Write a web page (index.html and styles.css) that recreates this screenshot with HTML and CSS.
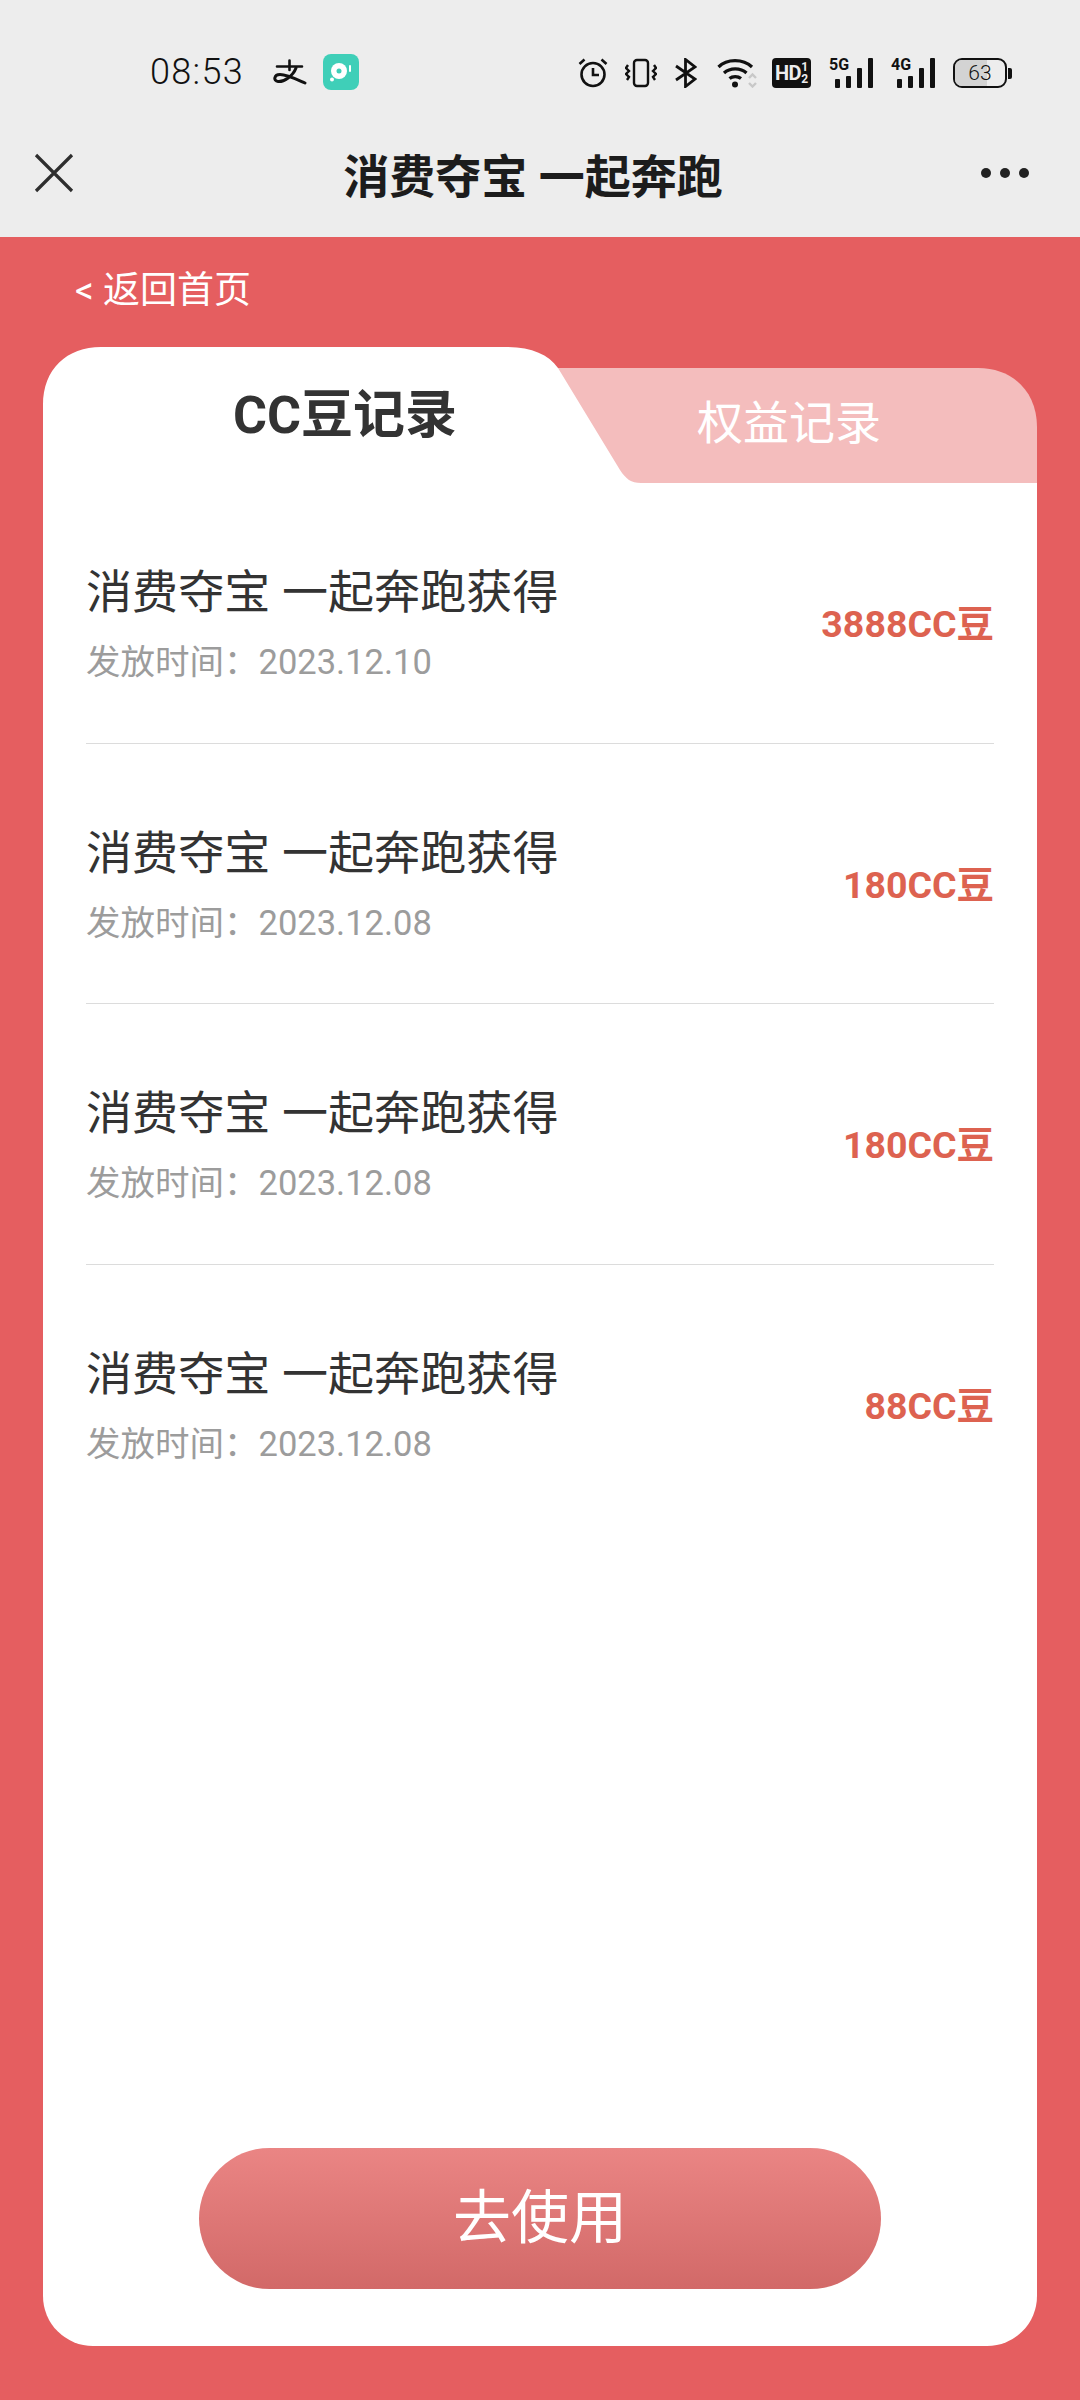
FILE: index.html
```html
<!DOCTYPE html>
<html lang="zh-CN">

<head>
	<meta charset="UTF-8">
	<meta name="viewport" content="width=device-width, initial-scale=1.0">
	<title>消费夺宝 一起奔跑</title>
	<link rel="stylesheet" href="styles.css">
</head>
<body>

	<!-- STATUS BAR --------------------------------- -->
	<div class="status-bar">
		<div class="status-left">
			<span class="time">08:53</span>
			<svg class="icon-alipay" width="34" height="26" viewBox="0 0 34 26" fill="none" stroke="#111" stroke-linecap="round">
				<path d="M4 7.500H29M16.500 1.500V11" stroke-width="2.600"/>
				<path d="M23 9C20 17 11 23 5 22.500C0 22 1 15.500 7 15.500C14 15.500 23 20 32 24" stroke-width="3"/>
			</svg>
			<svg class="icon-app" width="36" height="36" viewBox="0 0 36 36">
				<rect width="36" height="36" rx="8" fill="#3fcfb8"/>
				<circle cx="16" cy="17" r="8" fill="#fff"/>
				<circle cx="16" cy="17" r="2.500" fill="#3fcfb8"/>
				<circle cx="9" cy="25.500" r="2" fill="#fff"/>
				<rect x="26" y="11" width="2" height="7" rx="1" fill="#fff"/>
			</svg>
		</div>
		<div class="status-right">
			<svg width="30" height="30" viewBox="0 0 30 30" fill="none" stroke="#111" stroke-width="2.600">
				<circle cx="15" cy="16.500" r="11.500"/>
				<path d="M15 10V17H21M1.500 6L6.500 1.500M28.500 6L23.500 1.500"/>
			</svg>
			<svg class="gap-vibrate" width="32" height="30" viewBox="0 0 32 30" fill="none" stroke="#111" stroke-width="2.400">
				<rect x="9" y="2" width="14" height="26" rx="3"/>
				<path d="M3 7L1 10L4 13L1 16L4 19L2 22M29 7L31 10L28 13L31 16L28 19L30 22"/>
			</svg>
			<svg class="gap-bt" width="22" height="30" viewBox="0 0 22 30" fill="none" stroke="#111" stroke-width="2.800">
				<path d="M1 8L20 21L10.500 28.500V1.500L20 9L1 22"/>
			</svg>
			<svg class="gap-wifi" width="40" height="30" viewBox="0 0 40 30" fill="none">
				<path d="M1.500 9C10 0.500 26 0.500 35 9M7 15C13 9.500 23.500 9.500 29.500 15M12.500 20.500C15.500 18 21 18 24 20.500" stroke="#111" stroke-width="3.200"/>
				<circle cx="18" cy="26.500" r="3" fill="#111"/>
				<path d="M32 20L35.500 16.500L39 20M32 25L35.500 28.500L39 25" stroke="#c8c8c8" stroke-width="2.400"/>
			</svg>
			<div class="hd-badge">HD<span class="hd-sim"><i>1</i><i>2</i></span></div>
			<div class="signal gap-signal">
				<span class="signal-label">5G</span>
				<i class="bar-1"></i><i class="bar-2"></i><i class="bar-3"></i><i class="bar-4"></i>
			</div>
			<div class="signal gap-signal-2">
				<span class="signal-label">4G</span>
				<i class="bar-1"></i><i class="bar-2"></i><i class="bar-3"></i><i class="bar-4"></i>
			</div>
			<div class="battery">
				<div class="battery-body">
					<div class="battery-fill" style="width: 63%"></div>
					<span class="battery-text">63</span>
				</div>
				<div class="battery-tip"></div>
			</div>
		</div>
	</div>

	<!-- NAV BAR --------------------------------- -->
	<header class="nav-bar">
		<svg width="40" height="40" viewBox="0 0 40 40" fill="none" stroke="#2e2e2e" stroke-width="3.200">
			<path d="M2 2L38 38M38 2L2 38"/>
		</svg>
		<h1 class="nav-title">消费夺宝 一起奔跑</h1>
		<svg width="50" height="12" viewBox="0 0 50 12" fill="#222">
			<circle cx="6" cy="6" r="5"/>
			<circle cx="25" cy="6" r="5"/>
			<circle cx="44" cy="6" r="5"/>
		</svg>
	</header>

	<!-- CONTENT --------------------------------- -->
	<main class="page">
		<a class="back-link">&lt; 返回首页</a>

		<section class="card">
			<div class="tabs">
				<svg class="tabs-bg" width="994" height="136" viewBox="0 0 994 136">
					<path d="M440 21H935C970 21 994 45 994 80V136H500Z" fill="#f4bdbd"/>
					<path d="M0 136V58C0 22 24 0 58 0H462C488 0 505 7 515 21L577 123C583 132 588 136 598 136Z" fill="#fff"/>
				</svg>
				<div class="tab tab-active">CC豆记录</div>
				<div class="tab">权益记录</div>
			</div>

			<div class="card-body">
				<ul class="record-list">
					<li class="record">
						<div>
							<div class="record-title">消费夺宝 一起奔跑获得</div>
							<div class="record-time">发放时间&#65306;2023.12.10</div>
						</div>
						<div class="record-amount">3888CC豆</div>
					</li>
					<li class="record">
						<div>
							<div class="record-title">消费夺宝 一起奔跑获得</div>
							<div class="record-time">发放时间&#65306;2023.12.08</div>
						</div>
						<div class="record-amount">180CC豆</div>
					</li>
					<li class="record">
						<div>
							<div class="record-title">消费夺宝 一起奔跑获得</div>
							<div class="record-time">发放时间&#65306;2023.12.08</div>
						</div>
						<div class="record-amount">180CC豆</div>
					</li>
					<li class="record">
						<div>
							<div class="record-title">消费夺宝 一起奔跑获得</div>
							<div class="record-time">发放时间&#65306;2023.12.08</div>
						</div>
						<div class="record-amount">88CC豆</div>
					</li>
				</ul>
				<button class="use-btn">去使用</button>
			</div>
		</section>
	</main>

</body>

</html>
```

FILE: styles.css
```css
/* GENERAL --------------------------------- */
* {
	box-sizing: border-box;
}
html,
body {
	margin: 0;
	padding: 0;
}
body {
	height: 100vh;
	display: flex;
	flex-direction: column;
	font-family: Roboto, 'Noto Sans CJK SC', sans-serif;
	color: #333;
	background-color: #e55e60;
}

/* STATUS BAR --------------------------------- */
.status-bar {
	height: 97px;
	padding: 54px 68px 0 150px;
	display: flex;
	justify-content: space-between;
	align-items: flex-start;
	background-color: #ededed;
}
.status-left {
	height: 36px;
	display: flex;
	align-items: center;
}
.time {
	font-size: 36px;
	font-weight: 300;
	color: #111;
	letter-spacing: 1.300px;
}
.icon-alipay {
	margin-left: 29px;
}
.icon-app {
	margin-left: 16px;
}
.status-right {
	height: 36px;
	padding-top: 2px;
	display: flex;
	align-items: center;
}
.gap-vibrate {
	margin-left: 17px;
}
.gap-bt {
	margin-left: 18px;
}
.gap-wifi {
	margin-left: 20px;
}
.hd-badge {
	margin-left: 15px;
	width: 39px;
	height: 30px;
	padding-left: 3px;
	display: flex;
	align-items: center;
	background-color: #111;
	border-radius: 4px;
	font-size: 20px;
	font-weight: 700;
	color: #ededed;
	letter-spacing: -0.5px;
}
.hd-sim {
	display: flex;
	flex-direction: column;
	font-size: 12px;
	line-height: 12px;
}
.hd-sim i {
	font-style: normal;
}
.signal {
	position: relative;
	width: 44px;
	height: 30px;
	display: flex;
	justify-content: space-between;
	align-items: flex-end;
	padding-left: 6px;
}
.gap-signal {
	margin-left: 18px;
}
.gap-signal-2 {
	margin-left: 18px;
}
.signal i {
	width: 5px;
	background-color: #111;
	border-radius: 1px;
}
.signal .bar-1 {
	height: 9px;
}
.signal .bar-2 {
	height: 12px;
}
.signal .bar-3 {
	height: 20px;
}
.signal .bar-4 {
	height: 30px;
}
.signal-label {
	position: absolute;
	left: 0;
	top: -1px;
	font-size: 16px;
	line-height: 16px;
	font-weight: 700;
	color: #111;
}
.battery {
	margin-left: 18px;
	display: flex;
	align-items: center;
	gap: 1px;
}
.battery-body {
	position: relative;
	width: 54px;
	height: 30px;
	border: 2.500px solid #111;
	border-radius: 9px;
	overflow: hidden;
	display: flex;
	justify-content: center;
	align-items: center;
}
.battery-fill {
	position: absolute;
	left: 0;
	top: 0;
	bottom: 0;
	background-color: #d3d3d3;
}
.battery-text {
	position: relative;
	font-size: 21px;
	font-weight: 300;
	color: #111;
}
.battery-tip {
	width: 4px;
	height: 11px;
	background-color: #111;
	border-radius: 0 2px 2px 0;
}

/* NAV BAR --------------------------------- */
.nav-bar {
	height: 140px;
	padding: 12px 50px 0 34px;
	display: flex;
	justify-content: space-between;
	align-items: center;
	background-color: #ededed;
}
.nav-title {
	margin: 0 0 0 12px;
	font-size: 46px;
	font-weight: 700;
	color: #1c1c1c;
}

/* CONTENT --------------------------------- */
.page {
	flex: 1;
	min-height: 0;
	padding: 0 43px 54px;
	display: flex;
	flex-direction: column;
}
.back-link {
	height: 110px;
	padding: 28px 0 0 32px;
	font-size: 37px;
	line-height: 52px;
	color: #fff;
}
.card {
	flex: 1;
	display: flex;
	flex-direction: column;
}

/* TABS --------------------------------- */
.tabs {
	position: relative;
	height: 136px;
	display: flex;
}
.tabs-bg {
	position: absolute;
	left: 0;
	top: 0;
}
.tab {
	position: relative;
	padding-top: 40px;
	font-size: 46px;
	line-height: 72px;
	color: #fff;
}
.tab-active {
	width: 602px;
	padding: 33px 0 0 190px;
	font-size: 52px;
	font-weight: 700;
	color: #333;
}
.tab-active + .tab {
	padding-left: 52px;
}

/* RECORD LIST --------------------------------- */
.card-body {
	flex: 1;
	padding: 0 43px 57px;
	display: flex;
	flex-direction: column;
	background-color: #fff;
	border-radius: 0 0 50px 50px;
}
.record-list {
	flex: 1;
	margin: 0;
	padding: 0;
	list-style: none;
}
.record {
	height: 260.500px;
	padding: 79px 0 55px;
	display: flex;
	justify-content: space-between;
	align-items: center;
	border-bottom: 1px solid #dcdcdc;
}
.record:last-child {
	border-bottom: none;
}
.record-title {
	font-size: 46px;
	line-height: 60px;
	letter-spacing: 0.1px;
	color: #333;
}
.record-time {
	margin-top: 15px;
	font-size: 34.500px;
	line-height: 50px;
	color: #9c9c9c;
}
.record-amount {
	margin-top: -8px;
	font-size: 37.500px;
	font-weight: 700;
	color: #dd6250;
}

/* BUTTON --------------------------------- */
.use-btn {
	align-self: center;
	width: 682px;
	height: 141px;
	padding: 0 0 12px;
	border: none;
	border-radius: 71px;
	background: linear-gradient(to bottom, #ea8584, #d26968);
	font-family: inherit;
	font-size: 58px;
	color: #fff;
}
```
